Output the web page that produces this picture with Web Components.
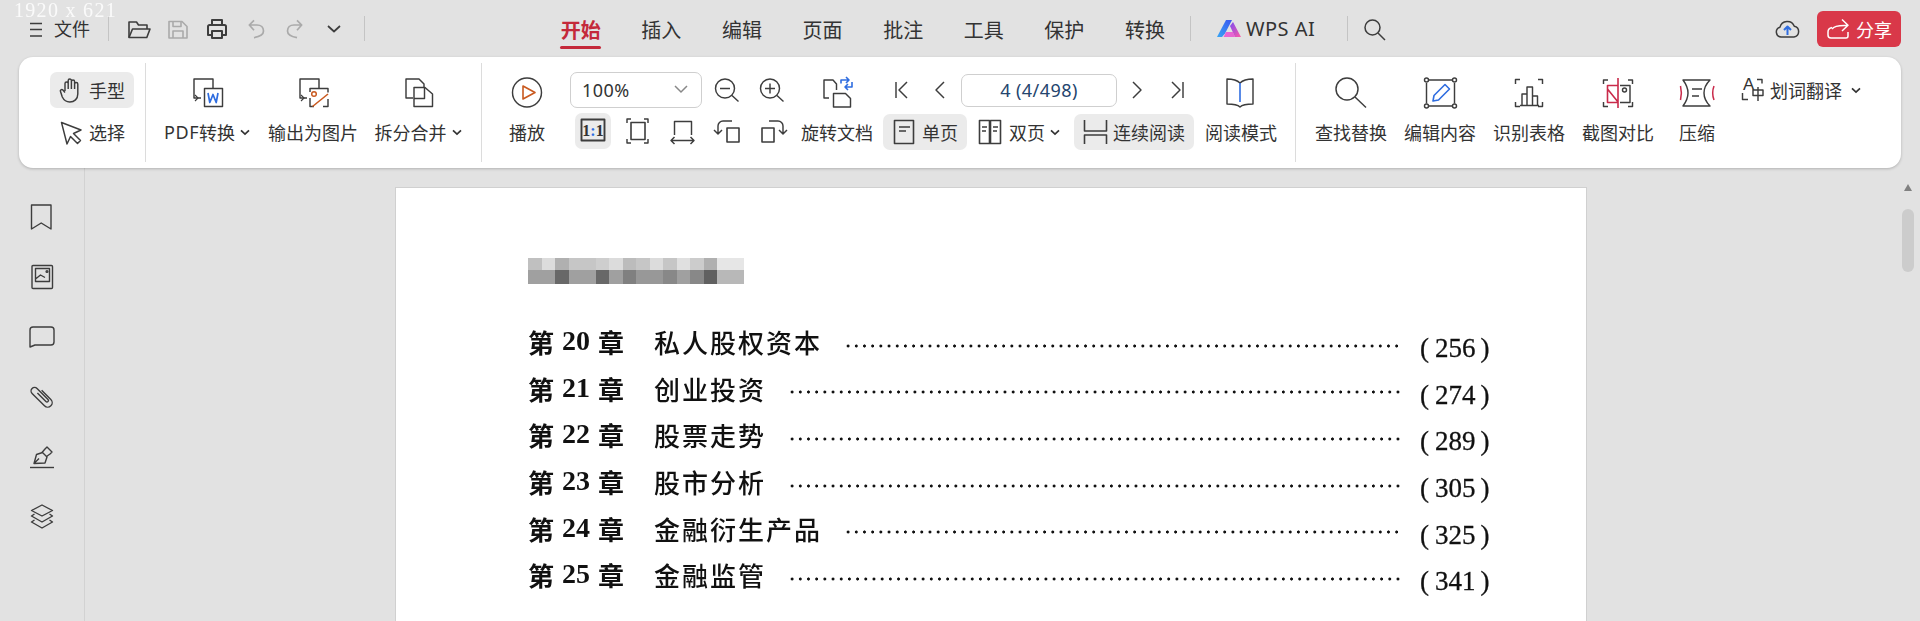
<!DOCTYPE html>
<html lang="zh-CN"><head><meta charset="utf-8"><title>WPS PDF</title>
<style>
html,body{margin:0;padding:0;height:100%;overflow:hidden;background:#e2e2e2}
body{font-family:"Noto Sans CJK SC","Noto Sans",sans-serif;color:#333}
</style></head><body>
<wps-app></wps-app>
<script>
const BLUE='#2f6de0',OR='#c9591f',RED='#c92a4a';
const ICONS={
menu:'<path d="M6 6.500h12M6 12.500h12M6 19h12"/>',
folder:'<path d="M2 20.500V5h7.500l2 3H20v4"/><path d="M2 20.500 5.500 12H23l-3.200 8.500z"/>',
save:'<path d="M3 4.500h13l5 5V21H3z"/><path d="M7 4.500v5h8v-5M7 21v-7h10v7"/>',
print:'<path stroke-width="2" d="M7 8V3h10v5M7 18H3V9.500a1.500 1.500 0 0 1 1.500-1.500h15A1.500 1.500 0 0 1 21 9.500V18h-4"/><path stroke-width="2" d="M7 14h10v7H7z"/>',
undo:'<path d="M10 3.300 5.300 8l4.700 5.300M5.300 8H13c4 0 6.500 2.500 6.500 6 0 3-3 5.500-9.500 6.700"/>',
redo:'<path d="M14 3.300 18.700 8 14 13.300M18.700 8H11c-4 0-6.500 2.500-6.500 6 0 3 3 5.500 9.500 6.700"/>',
chev:'<path stroke-width="1.700" d="M6 9l6 5.500L18 9"/>',
search:'<circle cx="10.500" cy="10.500" r="7.500"/><path d="M16 16l7 7"/>',
cloud:'<path d="M7 20H6a5 5 0 0 1-1-9.800 7.500 7.500 0 0 1 14.300-1A5.500 5.500 0 0 1 19 20z"/><path stroke="#2f6de0" stroke-width="2" d="M12.500 18v-8M9 13l3.500-3.500L16 13"/>',
share:'<path d="M5 9.500C2.500 10 1 12 1 14v3a3 3 0 0 0 3 3h15a2 2 0 0 0 2-2v-4"/><path d="M5 11c2-3 7-4 16-3.500M15 1.500l6 5.800-6 5.700"/>',
hand:'<path d="M8 15V7.500a1.600 1.600 0 0 1 3.200 0V13M11.200 13V4.600a1.600 1.600 0 0 1 3.200 0V13M14.400 13V5.500a1.600 1.600 0 0 1 3.200 0V13M17.600 13V8a1.600 1.600 0 0 1 3.200 0v10c0 5-3.500 8-8 8-4 0-6-2-7.500-5L3.500 15.600c-.8-1.500 1.200-2.800 2.400-1.500L8 16.500"/>',
arrow:'<path d="M4.500 4.500 24 12l-7.500 3.500 7 7-3 3-7-7L10 26z"/>',
pdf:`<path d="M12 26H5V7h19v9"/><path d="M6 23l3 3-3 3" stroke-width="1.100"/><path d="M15.500 16.500h18v18h-18z"/><path stroke="${BLUE}" stroke-width="1.700" d="M19 21l1.800 9.500 3.200-8 3.200 8 1.800-9.500"/>`,
pic:`<path d="M12 26H5V7h19v9"/><path d="M6 23l3 3-3 3" stroke-width="1.100"/><path d="M15 26v8.500h4M15 20v-3.500h18v4M33 27v7.500h-5"/><circle cx="19" cy="22" r="2.300" stroke="${OR}"/><path stroke="${OR}" stroke-width="1.600" d="M17.500 34.500 33 22"/>`,
merge:'<path d="M13 26H6V7h13l5 5v3"/><path d="M14 15.500h11l7.500 6.500v12.500H14z"/><path d="M24.500 16v10.500H14"/>',
play:`<circle cx="18" cy="20.500" r="14.500"/><path stroke="${OR}" stroke-width="1.600" d="M14 14l12 6.500L14 27z"/>`,
zout:'<circle cx="16" cy="16.500" r="9.500"/><path d="M23 23.500l6.500 6M11 16.500h10"/>',
zin:'<circle cx="16" cy="16.500" r="9.500"/><path d="M23 23.500l6.500 6M11 16.500h10M16 11.500v10"/>',
one:`<path stroke-width="1.900" d="M6.500 6.500h23v21h-23z"/><text x="18" y="22.500" text-anchor="middle" font-family="Liberation Serif" font-weight="700" font-size="16" fill="#333" stroke="none">1<tspan fill="${BLUE}">:</tspan>1</text>`,
fit:'<path d="M7 9V5h4M24 5h4v4M7 25v4h4M24 29h4v-4"/><path stroke-width="1.600" d="M11 8.500h14v17H11z"/>',
fitw:'<path d="M9.500 21V7.500h17V21"/><path d="M6 26.500h23M9.500 23 6 26.500 9.500 30M25.500 23 29 26.500 25.500 30"/>',
rotl:'<path stroke-width="1.600" d="M17 14h12v14H17z"/><path d="M22 7h-9a5 5 0 0 0-5 5v8M4 16l4 4 4-4"/>',
rotr:'<path stroke-width="1.600" d="M7 14h12v14H7z"/><path d="M14 7h9a5 5 0 0 1 5 5v8M24 16l4 4 4-4"/>',
rotdoc:`<path d="M10 26H5V8h9l3.500 4v6"/><path d="M14.500 21.500h12l5 5v8.500h-17z"/><path stroke="${BLUE}" stroke-width="1.600" d="M22 11.500V8h8M27 5l3 3-3 3M33 10v5h-7M29 12l-3 3 3 3"/>`,
first:'<path d="M13 10v16M24 10l-8 8 8 8"/>',
prev:'<path d="M23 10l-8 8 8 8"/>',
next:'<path d="M13 10l8 8-8 8"/>',
last:'<path d="M13 10l8 8-8 8M24 10v16"/>',
single:'<path stroke-width="1.600" d="M5.500 2.500h19v23h-19z"/><path d="M10 9h11M10 13h7"/>',
dbl:'<path stroke-width="1.600" d="M4.500 2.500H14.500v23H4.500zM15.500 2.500h10v23h-10z"/><path d="M7 9h5M7 13h4M18 9h5M18 13h4"/>',
cont:'<path stroke-width="1.600" d="M4.500 2v11h22V2M4.500 26v-9h22v9"/>',
book:`<path d="M17 11C14 8 9 7 4 7v25c5 0 10 0 13 3 3-3 8-3 13-3V7c-5 0-10 1-13 4z"/><path stroke="${BLUE}" stroke-width="1.600" d="M17 11v19"/>`,
find:'<circle cx="14" cy="17" r="11"/><path d="M22 25l11 10.500"/>',
edit:`<path d="M7 8h23M7 34h23M4.500 11v20.500M32.500 11v20.500"/><circle cx="4.500" cy="8" r="2"/><circle cx="32.500" cy="8" r="2"/><circle cx="4.500" cy="34" r="2"/><circle cx="32.500" cy="34" r="2"/><path stroke="${BLUE}" stroke-width="1.600" d="M11 29l1-5.500 11-11 4.500 4.500-11 11z"/>`,
table:'<path d="M4.500 12V7.500H9M27 7.500h4.500V12M4.500 30v4.500H9M27 34.500h4.500V30"/><path d="M11 33V22h5v11M16 33V15h5.500v18M21.500 33V24h5v9M9 33.500h19"/>',
cmp:`<path d="M3.500 12V8H8M28 8h4.500v4M3.500 30v4.500H8M28 34.500h4.500V30"/><path stroke="${RED}" stroke-width="1.600" d="M18 6v30M18 13.500H7.500v17H18M7.500 17 18 30"/><path d="M20 13.500h10v17H20"/><circle cx="24.500" cy="18" r="2"/>`,
press:`<path d="M4 8h27c-4 4-6 9-6 13s2 9 6 13H4c3-4 5-9 5-13S7 12 4 8z"/><path d="M13 17h10M13 24h7"/><path stroke="${RED}" stroke-width="1.500" d="M1.500 14c1 4 1 10 0 14M35 14c-1.500 4-1.500 10 0 14"/>`,
trans:'<text x="2" y="14" font-family="Liberation Sans" font-size="17" fill="#333" stroke="none">A</text><path d="M16 3.500h5v4M1.500 17v6.500H7"/><path d="M12 14h10v5.500H12zM17 11v14"/>',
bm:'<path d="M4.500 3h19.500v24l-9.800-6-9.700 6z"/>',
img:'<rect x="5" y="3.500" width="20.500" height="23" rx="1"/><path d="M8.500 6.500h14v13h-14zM8.500 17l5-4 4.500 2.500"/><circle cx="20" cy="9.500" r=".9"/>',
cmt:'<path d="M3 8a3 3 0 0 1 3-3h18a3 3 0 0 1 3 3v12a3 3 0 0 1-3 3H8l-5 2z"/>',
clip:'<path transform="rotate(-45 15 15)" d="M19.500 10v13a4.500 4.500 0 0 1-9 0V5.500a3.500 3.500 0 0 1 7 0V21a1.500 1.500 0 0 1-3 0V9"/>',
pen:'<path d="M3 25.500h24"/><path d="M7 21.500l2.500-9 6-2 4.500 4.500-2 6zM7 21.500l5-5"/><path d="M15 10.500l3-3.500 2-2 5 5-2 2-3.500 2.500" />',
layer:'<path d="M15 3l10.500 5.500L15 14 4.500 8.500zM7.500 12 4.500 14 15 20l10.500-6-3-2M7.500 18 4.500 20 15 26l10.500-6-3-2"/>'
};
class El extends HTMLElement{
  render(css,html){const r=this.attachShadow({mode:'open'});r.innerHTML=`<style>${css}</style>${html}`;return r}
}
class RbIcon extends El{connectedCallback(){
  const n=this.getAttribute('name'),s=+(this.getAttribute('size')||36),c=this.getAttribute('color')||'#3d3d3d',w=this.getAttribute('sw')||'1.450';
  this.render(`:host{display:block;flex:none;width:${s}px;height:${s}px}svg{display:block;overflow:visible}`,
  `<svg width="${s}" height="${s}" viewBox="0 0 ${s} ${s}" fill="none" stroke="${c}" stroke-width="${w}" stroke-linejoin="round">${ICONS[n]}</svg>`)
}}
class WpsTab extends El{connectedCallback(){
  this.render(`:host{display:block;flex:none;width:80.600px;height:57px;position:relative;text-align:center;font-size:20px;line-height:59px;color:#333}
  :host([active]){color:#c4293a;font-weight:700}
  :host([active])::after{content:"";position:absolute;left:20px;width:41px;top:46px;height:3px;border-radius:2px;background:#c4293a}`,'<slot></slot>')
}}
class WpsTitlebar extends El{connectedCallback(){
  this.render(`:host{display:flex;align-items:center;height:57px;flex:none;font-size:18px;color:#333}
  .sep{width:1px;height:25px;background:#c4c4c4;flex:none}
  .q{width:39px;display:flex;justify-content:center;flex:none}
  .ai{font:20px/57px "Noto Sans","Noto Sans CJK SC",sans-serif;letter-spacing:.5px;width:72px;white-space:nowrap;color:#333;margin-left:5px}
  .share{margin:0 19px 0 18px;width:84px;height:36px;background:#d93849;color:#fff;border-radius:6px;display:flex;align-items:center;padding-left:10px;box-sizing:border-box;gap:7px}
  .push{flex:1}`,
  `<rb-icon name="menu" size="24" style="margin-left:24px" sw="1.400"></rb-icon>
  <span style="margin-left:6px;line-height:55px">文件</span>
  <div class="sep" style="margin-left:18px"></div>
  <div class="q" style="margin-left:10.400px"><rb-icon name="folder" size="24" sw="1.600"></rb-icon></div>
  <div class="q"><rb-icon name="save" size="24" color="#aaaaaa" sw="1.600"></rb-icon></div>
  <div class="q"><rb-icon name="print" size="24"></rb-icon></div>
  <div class="q"><rb-icon name="undo" size="24" color="#aaaaaa" sw="1.700"></rb-icon></div>
  <div class="q"><rb-icon name="redo" size="24" color="#aaaaaa" sw="1.700"></rb-icon></div>
  <div class="q"><rb-icon name="chev" size="24"></rb-icon></div>
  <div class="sep" style="margin-left:10.400px;margin-right:175.700px"></div>
  <wps-tab active>开始</wps-tab><wps-tab>插入</wps-tab><wps-tab>编辑</wps-tab><wps-tab>页面</wps-tab><wps-tab>批注</wps-tab><wps-tab>工具</wps-tab><wps-tab>保护</wps-tab><wps-tab>转换</wps-tab>
  <div class="sep" style="margin-left:4.700px"></div>
  <svg style="margin-left:26px;flex:none" width="24" height="18" viewBox="0 0 24 18">
    <defs><linearGradient id="g1" x1="0" y1="1" x2="1" y2="0"><stop offset="0" stop-color="#38a6f5"/><stop offset="1" stop-color="#3a55f0"/></linearGradient>
    <linearGradient id="g2" x1="0" y1="0" x2="1" y2="1"><stop offset="0" stop-color="#7a4cf0"/><stop offset="1" stop-color="#ff5aa8"/></linearGradient></defs>
    <path fill="url(#g1)" d="M0 17 9 0h6L8 13.500 5 17z"/><path fill="url(#g2)" d="M13 6l3-4 8 15h-6z"/><path fill="#e94fd0" d="M9 12h7l2 5H6.500z" opacity=".85"/></svg>
  <span class="ai">WPS AI</span>
  <div class="sep" style="margin-left:29px"></div>
  <rb-icon name="search" size="24" style="margin-left:14px" sw="1.500"></rb-icon>
  <div class="push"></div>
  <rb-icon name="cloud" size="24" sw="1.500"></rb-icon>
  <div class="share"><rb-icon name="share" size="22" color="#fff" sw="1.500"></rb-icon><span style="line-height:36px">分享</span></div>`)
}}
class RbBig extends El{connectedCallback(){
  this.render(`:host{display:grid;grid-template-rows:36px 36px;row-gap:6px;padding-top:15px;justify-items:center;flex:none;box-sizing:border-box;font-size:18px;line-height:36px;color:#333;white-space:nowrap}
  .l{display:flex;align-items:center}`,`<slot name="icon"></slot><div class="l"><slot></slot></div>`)
}}
class RbBtn extends El{connectedCallback(){
  this.render(`:host{display:flex;align-items:center;flex:none;height:36px;box-sizing:border-box;border-radius:7px;font-size:18px;color:#333;white-space:nowrap;line-height:36px}
  :host([on]){background:#ebebeb}`,`<slot></slot>`)
}}
class RbChev extends El{connectedCallback(){
  this.render(`:host{display:inline-block;flex:none}svg{display:block}`,`<svg width="10" height="7" viewBox="0 0 10 7" fill="none" stroke="#333" stroke-width="1.700"><path d="M1 1.300 5 5l4-3.700"/></svg>`)
}}
class WpsRibbon extends El{connectedCallback(){
  this.render(`:host{display:flex;flex:none;height:111px;margin:0 19px;background:#fff;border-radius:14px;box-shadow:0 1px 3px rgba(0,0,0,.22);position:relative;z-index:2}
  .div{width:1px;height:99px;margin-top:6px;background:#dcdcdc;flex:none}
  .col{display:grid;grid-template-rows:36px 36px;row-gap:6px;padding-top:15px;flex:none;box-sizing:border-box}
  .row{display:flex;align-items:center}
  .box{border:1px solid #cfcfcf;border-radius:7px;box-sizing:border-box;height:36px;font-family:"Noto Sans","Noto Sans CJK SC",sans-serif;font-size:18px;line-height:34px;letter-spacing:.45px;color:#333;flex:none;position:relative;white-space:nowrap}
  .m{margin-left:9px}
  .lat{font-family:"Noto Sans",sans-serif;letter-spacing:.6px}`,
  `<div class="col" style="width:95px;padding-left:31px;box-sizing:content-box;">
    <rb-btn on style="width:84px;padding-left:7px;gap:4px"><rb-icon name="hand" size="28"></rb-icon>手型</rb-btn>
    <rb-btn style="width:84px;padding-left:7px;gap:4px"><rb-icon name="arrow" size="28"></rb-icon>选择</rb-btn>
  </div>
  <div class="div"></div>
  <rb-big style="width:122px"><rb-icon slot="icon" name="pdf"></rb-icon><span class="lat">PDF</span>转换<rb-chev style="margin-left:5px"></rb-chev></rb-big>
  <rb-big style="width:88px"><rb-icon slot="icon" name="pic"></rb-icon>输出为图片</rb-big>
  <rb-big style="width:124px"><rb-icon slot="icon" name="merge"></rb-icon>拆分合并<rb-chev style="margin-left:5px"></rb-chev></rb-big>
  <div class="div" style="margin-left:1px"></div>
  <rb-big style="width:88px;padding-left:2px"><rb-icon slot="icon" name="play"></rb-icon>播放</rb-big>
  <div class="col" style="width:221px">
    <div class="row">
      <div class="box" style="width:132px;padding-left:11px">100%<span style="position:absolute;right:13px;top:12px;line-height:0"><svg width="14" height="9" viewBox="0 0 14 9" fill="none" stroke="#888" stroke-width="1.500"><path d="M1 1l6 6 6-6"/></svg></span></div>
      <rb-icon name="zout" style="margin-left:7px"></rb-icon><rb-icon name="zin" class="m"></rb-icon>
    </div>
    <div class="row" style="padding-left:5px">
      <rb-btn on style="margin-top:-2px"><rb-icon name="one"></rb-icon></rb-btn>
      <rb-icon name="fit" class="m"></rb-icon><rb-icon name="fitw" class="m"></rb-icon><rb-icon name="rotl" class="m"></rb-icon><rb-icon name="rotr" class="m"></rb-icon>
    </div>
  </div>
  <rb-big style="width:90px;padding-left:2px"><rb-icon slot="icon" name="rotdoc"></rb-icon>旋转文档</rb-big>
  <div class="col" style="width:314px;padding-left:2px">
    <div class="row">
      <rb-icon name="first"></rb-icon><rb-icon name="prev" style="margin-left:2px"></rb-icon>
      <div class="box" style="width:156px;height:33px;line-height:31px;margin-left:4px;text-align:center;color:#24456e">4 (4/498)</div>
      <rb-icon name="next" style="margin-left:3px"></rb-icon><rb-icon name="last" style="margin-left:3px"></rb-icon>
    </div>
    <div class="row">
      <rb-btn on style="width:84px;padding-left:6px;gap:5px"><rb-icon name="single" size="28"></rb-icon>单页</rb-btn>
      <rb-btn style="width:90px;margin-left:8px;gap:6px"><rb-icon name="dbl" size="28"></rb-icon>双页<rb-chev style="margin-left:-1px"></rb-chev></rb-btn>
      <rb-btn on style="width:120px;margin-left:9px;padding-left:6px;gap:5px"><rb-icon name="cont" size="28"></rb-icon>连续阅读</rb-btn>
    </div>
  </div>
  <rb-big style="width:92px"><rb-icon slot="icon" name="book"></rb-icon>阅读模式</rb-big>
  <div class="div" style="margin-left:8px"></div>
  <rb-big style="width:72px;margin-left:19px"><rb-icon slot="icon" name="find"></rb-icon>查找替换</rb-big>
  <rb-big style="width:72px;margin-left:17px"><rb-icon slot="icon" name="edit"></rb-icon>编辑内容</rb-big>
  <rb-big style="width:72px;margin-left:17px"><rb-icon slot="icon" name="table"></rb-icon>识别表格</rb-big>
  <rb-big style="width:72px;margin-left:17px"><rb-icon slot="icon" name="cmp"></rb-icon>截图对比</rb-big>
  <rb-big style="width:72px;margin-left:7px"><rb-icon slot="icon" name="press"></rb-icon>压缩</rb-big>
  <div class="col" style="margin-left:8px">
    <rb-btn style="gap:0"><rb-icon name="trans" size="28" style="margin-right:1px"></rb-icon>划词翻译<rb-chev style="margin-left:9px"></rb-chev></rb-btn>
  </div>`)
}}
class WpsSidebar extends El{connectedCallback(){
  this.render(`:host{display:flex;flex-direction:column;flex:none;width:85px;box-sizing:border-box;border-right:1px solid #d2d2d2;padding-top:19px}
  div{height:60px;display:flex;align-items:center;padding-left:27px}`,
  ['bm','img','cmt','clip','pen','layer'].map(n=>`<div><rb-icon name="${n}" size="30" sw="1.400"></rb-icon></div>`).join(''))
}}
class MosaicBar extends El{connectedCallback(){
  const a=['c0','dc','b0','c6','c6','ce','dc','bc','c6','dc','c6','e0','cc','b0','e6','e6'],b=['a0','a0','68','a0','a0','68','a0','80','98','98','88','a0','88','60','b8','b8'];
  this.render(`:host{display:grid;grid-template-columns:repeat(16,13.500px);grid-template-rows:12px 14px;width:216px}`,
  a.concat(b).map(c=>`<i style="background:#${c}${c}${c}"></i>`).join(''))
}}
class TocRow extends El{connectedCallback(){
  const n=this.getAttribute('num'),p=this.getAttribute('page');
  this.render(`:host{display:flex;align-items:center;height:46.600px;color:#111;filter:blur(.35px);white-space:nowrap}
  .ch{width:126px;flex:none;display:flex;font:700 26px/46px "Noto Sans CJK SC",sans-serif}
  .n{font:700 28px/44px "Liberation Serif",serif;margin:0 8px}
  .t{font:500 26px/46px "Noto Sans CJK SC",sans-serif;letter-spacing:2px;margin-right:22px;flex:none}
  .d{flex:1;height:6px;margin:7px 19px 0 0;background:radial-gradient(circle at center,#111 1.300px,transparent 1.800px) left center/8.200px 6px repeat-x}
  .p{width:69px;flex:none;font:27px/46px "Liberation Serif",serif;margin-top:12px;display:flex;-webkit-text-stroke:.3px #111}
  .p b{font-weight:400;margin:0 5px 0 6px}`,
  `<div class="ch"><span>第</span><span class="n">${n}</span><span>章</span></div><div class="t"><slot></slot></div><div class="d"></div><div class="p"><span>(</span><b>${p}</b><span>)</span></div>`)
}}
class DocPage extends El{connectedCallback(){
  this.render(`:host{display:block;width:1192px;flex:none;box-sizing:border-box;background:#fff;border:1px solid #d0d0d0;border-bottom:0;padding:70px 97px 0 132px}
  mosaic-bar{margin-bottom:35px}`,`<mosaic-bar></mosaic-bar><slot></slot>`)
}}
class DocView extends El{connectedCallback(){
  this.render(`:host{display:flex;flex:1;min-width:0;overflow:hidden;padding:19px 0 0 310px}
  .sb{margin-left:auto;margin-right:6px;width:12px;flex:none;margin-top:-3px;display:flex;flex-direction:column;align-items:center}
  .up{width:0;height:0;border-left:4px solid transparent;border-right:4px solid transparent;border-bottom:7px solid #808080;margin-bottom:18px}
  .th{width:12px;height:63px;border-radius:6px;background:#cccccc}`,
  `<slot></slot><div class="sb"><div class="up"></div><div class="th"></div></div>`)
}}
class WpsApp extends El{connectedCallback(){
  this.render(`:host{display:flex;flex-direction:column;height:621px;width:1920px;overflow:hidden;background:#e2e2e2;position:relative}
  .main{display:flex;flex:1;min-height:0}
  .wm{position:absolute;left:14px;top:-2px;font:20px/24px "Liberation Serif",serif;letter-spacing:1.300px;color:#fff;opacity:.85;z-index:3;white-space:nowrap}`,
  `<wps-titlebar></wps-titlebar><wps-ribbon></wps-ribbon>
  <div class="main"><wps-sidebar></wps-sidebar><doc-view><doc-page>
    <toc-row num="20" page="256">私人股权资本</toc-row>
    <toc-row num="21" page="274">创业投资</toc-row>
    <toc-row num="22" page="289">股票走势</toc-row>
    <toc-row num="23" page="305">股市分析</toc-row>
    <toc-row num="24" page="325">金融衍生产品</toc-row>
    <toc-row num="25" page="341">金融监管</toc-row>
  </doc-page></doc-view></div>
  <div class="wm">1920 x 621</div>`)
}}
const defs={'rb-icon':RbIcon,'rb-chev':RbChev,'rb-big':RbBig,'rb-btn':RbBtn,'wps-tab':WpsTab,'wps-titlebar':WpsTitlebar,'wps-ribbon':WpsRibbon,'wps-sidebar':WpsSidebar,'mosaic-bar':MosaicBar,'toc-row':TocRow,'doc-page':DocPage,'doc-view':DocView,'wps-app':WpsApp};
for(const k in defs)customElements.define(k,defs[k]);
</script>
</body></html>
